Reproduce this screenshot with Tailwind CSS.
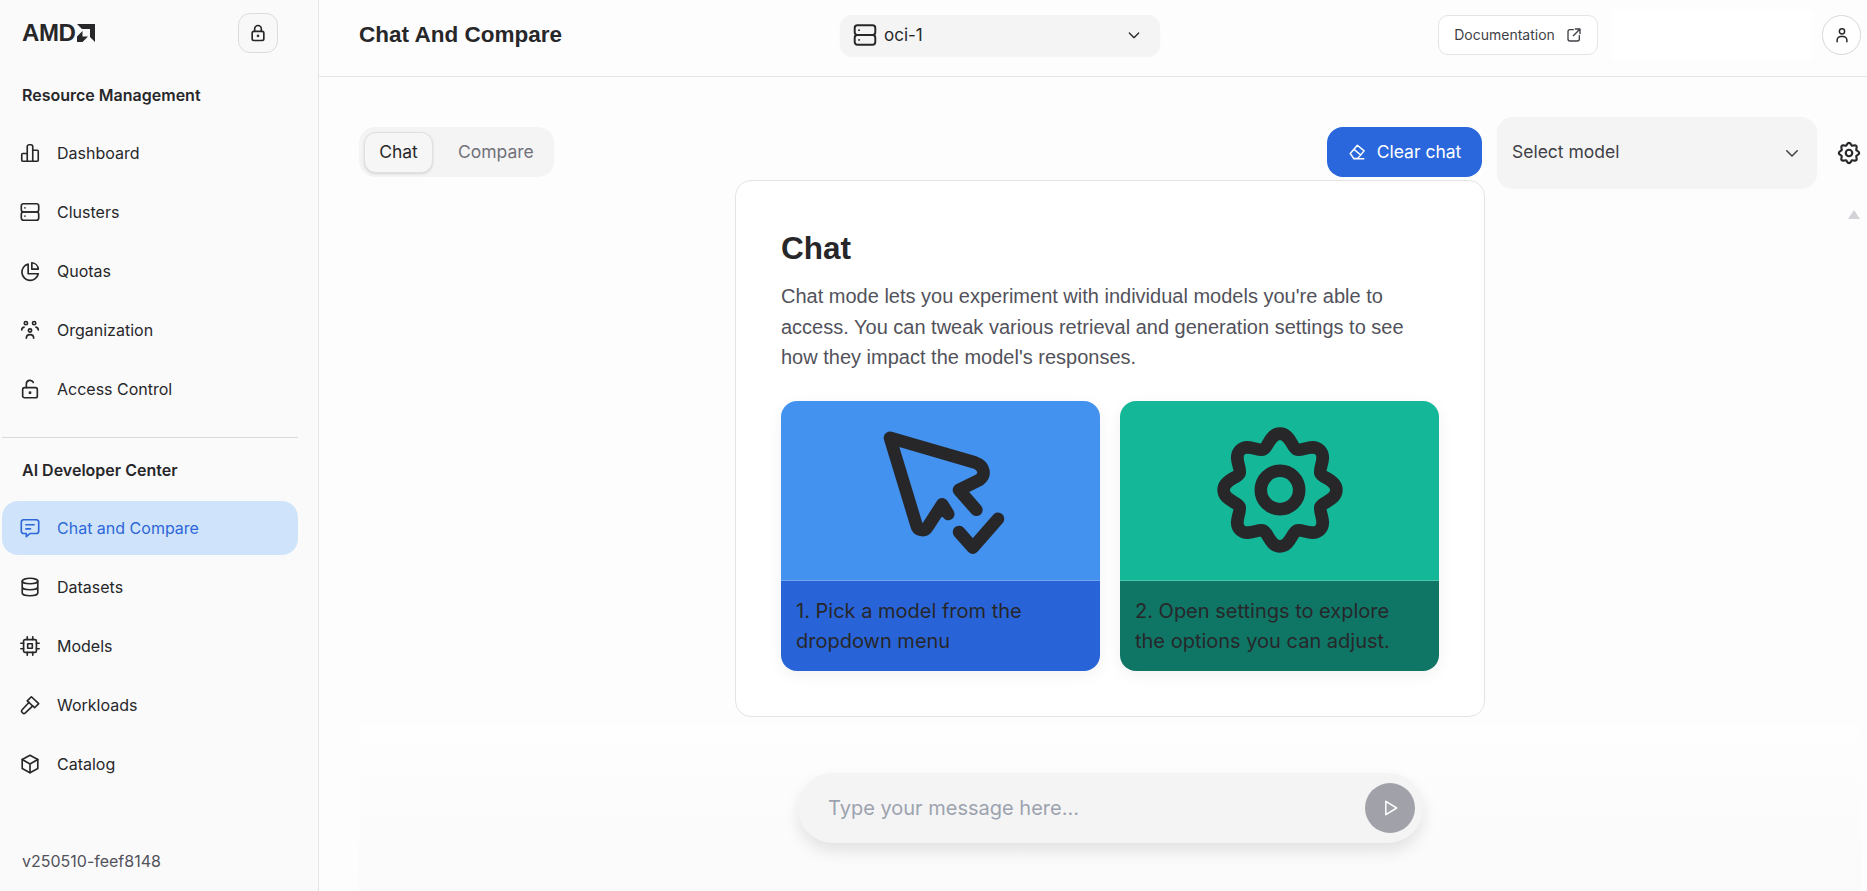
<!DOCTYPE html>
<html lang="en">
<head>
    <meta charset="UTF-8">
    <meta name="viewport" content="width=device-width, initial-scale=1.0">
    <title>Chat And Compare</title>
    <script src="https://cdn.jsdelivr.net/npm/@tailwindcss/browser@4"></script>
</head>
<body class="h-screen overflow-hidden bg-[#fdfdfd] text-[#27272a] font-['Inter',sans-serif]">
    <div class="flex h-full">
        <!-- Sidebar -->
        <aside class="w-[319px] shrink-0 h-full bg-[#fafafa] border-r border-[#e4e4e7] flex flex-col">
            <div class="h-[77px] pl-[22px] pt-[13px] flex items-start">
                <div class="flex items-center h-[40px] w-[216px]">
                    <span class="font-['Liberation_Sans',sans-serif] font-bold text-[24px] leading-none tracking-[-0.4px] text-[#27272a]">AMD</span>
                    <svg class="ml-[2px] w-[18px] h-[18px] -mt-[1px]" viewBox="0 0 18 18" fill="#27272a">
                        <path d="M0 0H18V18L13 13V5H5Z"></path>
                        <path d="M5.5 7 0 12.5V18H5.5L11 12.5H5.5Z"></path>
                    </svg>
                </div>
                <button class="w-[40px] h-[40px] rounded-xl border border-[#dcdcdf] bg-[#f8f8f8] flex items-center justify-center">
                    <svg class="w-5 h-5" fill="none" stroke="currentColor" stroke-width="2" stroke-linecap="round" stroke-linejoin="round" viewBox="0 0 24 24">
                        <rect x="5" y="10" width="14" height="11" rx="2"></rect>
                        <path d="M8 10V7a4 4 0 0 1 8 0v3"></path>
                        <circle cx="12" cy="15.5" r=".6"></circle>
                    </svg>
                </button>
            </div>

            <h2 class="h-[36px] pl-[22px] flex items-center text-base font-semibold">Resource Management</h2>
            <nav class="mt-[13px] ml-[2px] w-[296px] flex flex-col gap-[5px] text-base">
                <a class="h-[54px] pl-[17px] flex items-center gap-[16px]">
                    <svg class="w-[22px] h-[22px]" fill="none" stroke="currentColor" stroke-width="1.800" stroke-linecap="round" stroke-linejoin="round" viewBox="0 0 24 24"><path d="M3 13.500a1 1 0 0 1 1-1h5V21H4a1 1 0 0 1-1-1zM9 5a2 2 0 0 1 2-2h2a2 2 0 0 1 2 2v16H9zM15 9h5a1 1 0 0 1 1 1v10a1 1 0 0 1-1 1h-5"></path></svg>
                    <span>Dashboard</span>
                </a>
                <a class="h-[54px] pl-[17px] flex items-center gap-[16px]">
                    <svg class="w-[22px] h-[22px]" fill="none" stroke="currentColor" stroke-width="1.800" stroke-linecap="round" stroke-linejoin="round" viewBox="0 0 24 24"><rect x="2.500" y="3" width="19" height="9" rx="2.500"></rect><rect x="2.500" y="12" width="19" height="9" rx="2.500"></rect><path d="M6.500 7.500h.01M6.500 16.500h.01"></path></svg>
                    <span>Clusters</span>
                </a>
                <a class="h-[54px] pl-[17px] flex items-center gap-[16px]">
                    <svg class="w-[22px] h-[22px]" fill="none" stroke="currentColor" stroke-width="1.800" stroke-linecap="round" stroke-linejoin="round" viewBox="0 0 24 24"><path d="M10 4.500a9 9 0 1 0 11 10.500H10z"></path><path d="M14 3a7.500 7.500 0 0 1 7 7h-7z"></path></svg>
                    <span>Quotas</span>
                </a>
                <a class="h-[54px] pl-[17px] flex items-center gap-[16px]">
                    <svg class="w-[22px] h-[22px]" fill="none" stroke="currentColor" stroke-width="1.800" stroke-linecap="round" stroke-linejoin="round" viewBox="0 0 24 24"><circle cx="7.500" cy="4.500" r="1.800"></circle><circle cx="16.500" cy="4.500" r="1.800"></circle><circle cx="12" cy="12.500" r="1.800"></circle><path d="M3 12c0-1.800 1-3 2.500-3.200M21 12c0-1.800-1-3-2.500-3.200M8 21c0-2.400 1.600-4 4-4s4 1.600 4 4"></path></svg>
                    <span>Organization</span>
                </a>
                <a class="h-[54px] pl-[17px] flex items-center gap-[16px]">
                    <svg class="w-[22px] h-[22px]" fill="none" stroke="currentColor" stroke-width="1.800" stroke-linecap="round" stroke-linejoin="round" viewBox="0 0 24 24"><rect x="4" y="10.500" width="16" height="11" rx="2"></rect><path d="M8 10.500V6.500a4 4 0 0 1 7.600-1.700"></path><circle cx="12" cy="16" r=".7"></circle></svg>
                    <span>Access Control</span>
                </a>
            </nav>

            <div class="mt-[21px] ml-[2px] w-[296px] border-t border-[#d8d8da]"></div>

            <h2 class="mt-[14px] h-[36px] pl-[22px] flex items-center text-base font-semibold">AI Developer Center</h2>
            <nav class="mt-[13px] ml-[2px] w-[296px] flex flex-col gap-[5px] text-base">
                <a class="h-[54px] pl-[17px] flex items-center gap-[16px] rounded-2xl bg-[#cfe4fa] text-[#2d67d8]">
                    <svg class="w-[22px] h-[22px]" fill="none" stroke="currentColor" stroke-width="1.800" stroke-linecap="round" stroke-linejoin="round" viewBox="0 0 24 24"><path d="M5 3h14a2.500 2.500 0 0 1 2.500 2.500v10A2.500 2.500 0 0 1 19 18h-7l-4 3.500V18H5a2.500 2.500 0 0 1-2.500-2.500v-10A2.500 2.500 0 0 1 5 3z"></path><path d="M7.500 8.500h9M7.500 13h5"></path></svg>
                    <span>Chat and Compare</span>
                </a>
                <a class="h-[54px] pl-[17px] flex items-center gap-[16px]">
                    <svg class="w-[22px] h-[22px]" fill="none" stroke="currentColor" stroke-width="1.800" stroke-linecap="round" stroke-linejoin="round" viewBox="0 0 24 24"><ellipse cx="12" cy="5.500" rx="8.500" ry="3"></ellipse><path d="M3.500 5.500v13c0 1.700 3.800 3 8.500 3s8.500-1.300 8.500-3v-13M3.500 12c0 1.700 3.800 3 8.500 3s8.500-1.300 8.500-3"></path></svg>
                    <span>Datasets</span>
                </a>
                <a class="h-[54px] pl-[17px] flex items-center gap-[16px]">
                    <svg class="w-[22px] h-[22px]" fill="none" stroke="currentColor" stroke-width="1.800" stroke-linecap="round" stroke-linejoin="round" viewBox="0 0 24 24"><rect x="5" y="5" width="14" height="14" rx="1.500"></rect><rect x="9.500" y="9.500" width="5" height="5"></rect><path d="M9 2v3M15 2v3M9 19v3M15 19v3M2 9h3M2 15h3M19 9h3M19 15h3"></path></svg>
                    <span>Models</span>
                </a>
                <a class="h-[54px] pl-[17px] flex items-center gap-[16px]">
                    <svg class="w-[22px] h-[22px]" fill="none" stroke="currentColor" stroke-width="1.800" stroke-linecap="round" stroke-linejoin="round" viewBox="0 0 24 24"><path d="M11 9 3.200 17.400a1.800 1.800 0 0 0 .1 2.500l.8.800a1.800 1.800 0 0 0 2.500 .1L15 13"></path><path d="M9 7.500 13.500 3l8 7.500-4.500 4.500z"></path></svg>
                    <span>Workloads</span>
                </a>
                <a class="h-[54px] pl-[17px] flex items-center gap-[16px]">
                    <svg class="w-[22px] h-[22px]" fill="none" stroke="currentColor" stroke-width="1.800" stroke-linecap="round" stroke-linejoin="round" viewBox="0 0 24 24"><path d="M12 2.500 20.500 7v10L12 21.500 3.500 17V7z"></path><path d="M3.500 7 12 12l8.500-5M12 12v9.500"></path></svg>
                    <span>Catalog</span>
                </a>
            </nav>

            <div class="mt-auto pb-[18px] pl-[22px] text-base text-[#52525b]">v250510-feef8148</div>
        </aside>

        <!-- Main -->
        <main class="flex-1 min-w-0 h-full flex flex-col relative">
            <header class="h-[77px] shrink-0 border-b border-[#e4e4e7] pl-[40px] pr-[6px] flex items-center">
                <h1 class="w-[481px] text-[22.500px] font-semibold font-['Liberation_Sans',sans-serif] -mt-[7px]">Chat And Compare</h1>
                <div class="w-[320px] h-[41px] -mt-[6px] bg-[#f4f4f5] rounded-xl shadow-[0_1px_2px_rgba(0,0,0,0.04)] pl-[12px] pr-[18px] flex items-center">
                    <svg class="w-[26px] h-[26px]" fill="none" stroke="currentColor" stroke-width="1.800" stroke-linecap="round" stroke-linejoin="round" viewBox="0 0 24 24"><rect x="2.500" y="3" width="19" height="9" rx="2.500"></rect><rect x="2.500" y="12" width="19" height="9" rx="2.500"></rect><path d="M6.500 7.500h.01M6.500 16.500h.01"></path></svg>
                    <span class="ml-[6px] text-[17px] mt-[1px]">oci-1</span>
                    <svg class="ml-auto w-[16px] h-[16px]" fill="none" stroke="currentColor" stroke-width="2" stroke-linecap="round" stroke-linejoin="round" viewBox="0 0 24 24"><path d="m5 9 7 7 7-7"></path></svg>
                </div>
                <a class="ml-auto w-[160px] h-[40px] -mt-[6px] rounded-[10px] border border-[#e4e4e7] bg-white flex items-center justify-center gap-[11px] text-sm text-[#3f3f46]">
                    <span>Documentation</span>
                    <svg class="w-[16px] h-[16px]" fill="none" stroke="currentColor" stroke-width="2" stroke-linecap="round" stroke-linejoin="round" viewBox="0 0 24 24"><path d="M11 4H6a3 3 0 0 0-3 3v11a3 3 0 0 0 3 3h11a3 3 0 0 0 3-3v-5M14 3h7v7M21 3 11 13"></path></svg>
                </a>
                <div class="ml-[14px] w-[201px] h-[50px] -mt-[6px] bg-white blur-[2px]"></div>
                <button class="ml-[9px] w-[39px] h-[40px] -mt-[6px] rounded-full border border-[#d8d8da] bg-white flex items-center justify-center">
                    <svg class="w-[18px] h-[18px]" fill="none" stroke="currentColor" stroke-width="2" stroke-linecap="round" stroke-linejoin="round" viewBox="0 0 24 24"><circle cx="12" cy="7" r="3.500"></circle><path d="M5.500 21v-2a5 5 0 0 1 5-5h3a5 5 0 0 1 5 5v2"></path></svg>
                </button>
            </header>

            <div class="flex-1 min-h-0 flex flex-col pl-[40px] pr-[6px] pt-[40px]">
                <!-- Toolbar -->
                <div class="flex items-center h-[71px] shrink-0 -mr-[1px]">
                    <div class="w-[195px] h-[50px] -mt-[1px] rounded-2xl bg-[#f4f4f5] pl-[5px] flex items-center">
                        <div class="w-[69px] h-[41px] rounded-xl border border-[#e0e0e3] bg-[#f6f6f6] shadow-sm flex items-center justify-center text-[17.500px] text-[#27272a]">Chat</div>
                        <div class="ml-[25px] text-[17.500px] text-[#71717a]">Compare</div>
                    </div>
                    <button class="ml-auto w-[155px] h-[50px] -mt-[1px] rounded-2xl bg-[#2b67dc] text-white text-[17.500px] flex items-center justify-center gap-[11px]">
                        <svg class="w-[18px] h-[18px]" fill="none" stroke="currentColor" stroke-width="2" stroke-linecap="round" stroke-linejoin="round" viewBox="0 0 24 24"><path d="m3 14 9.500-11 9 7.500L13 20.500H7.500zM8 8.500l9 7.500M7.500 21H21"></path></svg>
                        <span>Clear chat</span>
                    </button>
                    <div class="ml-[15px] w-[320px] h-[71px] rounded-2xl bg-[#f4f4f5] shadow-[0_1px_2px_rgba(0,0,0,0.04)] pl-[15px] pr-[16px] flex items-center text-[17.500px] text-[#3f3f46]">
                        <span>Select model</span>
                        <svg class="ml-auto w-[18px] h-[18px]" fill="none" stroke="currentColor" stroke-width="2" stroke-linecap="round" stroke-linejoin="round" viewBox="0 0 24 24"><path d="m5 9 7 7 7-7"></path></svg>
                    </div>
                    <svg class="ml-[19px] w-[26px] h-[26px]" fill="none" stroke="currentColor" stroke-width="2" stroke-linecap="round" stroke-linejoin="round" viewBox="0 0 24 24">
                        <path d="M12 2.600C13.700 2.600 13.963 4.912 14.794 5.256S17.445 4.151 18.647 5.353S18.400 8.375 18.744 9.206S21.400 10.300 21.400 12S19.088 13.963 18.744 14.794S19.849 17.445 18.647 18.647S15.625 18.400 14.794 18.744S13.700 21.400 12 21.400S10.037 19.088 9.206 18.744S6.555 19.849 5.353 18.647S5.600 15.625 5.256 14.794S2.600 13.700 2.600 12S4.912 10.037 5.256 9.206S4.151 6.555 5.353 5.353S8.375 5.600 9.206 5.256S10.300 2.600 12 2.600Z"></path>
                        <circle cx="12" cy="12" r="3"></circle>
                    </svg>
                </div>

                <!-- Intro card -->
                <section class="-mt-[8px] mx-auto w-[750px] h-[537px] shrink-0 rounded-2xl border border-[#e4e4e7] bg-white pt-[47px] px-[45px]">
                    <h2 class="font-['Liberation_Sans',sans-serif] font-bold text-[31.500px] leading-[40px]">Chat</h2>
                    <p class="mt-[13px] font-['Liberation_Sans',sans-serif] text-[20px] leading-[30.500px] text-[#52525b]">Chat mode lets you experiment with individual models you're able to access. You can tweak various retrieval and generation settings to see how they impact the model's responses.</p>
                    <div class="mt-[28px] flex gap-[20px]">
                        <div class="w-[319px] h-[270px] rounded-2xl overflow-hidden flex flex-col shadow-[0_4px_16px_rgba(0,0,0,0.06)]">
                            <div class="h-[180px] bg-[#4392ef] flex items-center justify-center border-b border-[#6ea6f0]">
                                <svg class="w-[144px] h-[144px]" fill="none" stroke="#27272a" stroke-width="2.100" stroke-linecap="round" stroke-linejoin="round" viewBox="0 0 24 24">
                                    <path d="M13.200 16 12.200 14.400 9.800 18.100C9.200 19.100 8.100 18.700 7.900 17.800L3.500 3.300 17.600 7.400C19.300 8 19.500 9.500 18.400 10.300L15 12 17.900 15.300"></path>
                                    <path d="M15 19 17.300 21.600 21.500 16.800"></path>
                                </svg>
                            </div>
                            <div class="flex-1 bg-[#2864d8] pt-[15px] px-[15px] text-[20px] leading-[30px]">1. Pick a model from the dropdown menu</div>
                        </div>
                        <div class="w-[319px] h-[270px] rounded-2xl overflow-hidden flex flex-col shadow-[0_4px_16px_rgba(0,0,0,0.06)]">
                            <div class="h-[180px] bg-[#14b798] flex items-center justify-center border-b border-[#4cc7ae]">
                                <svg class="w-[144px] h-[144px]" fill="none" stroke="#27272a" stroke-width="2.100" stroke-linecap="round" stroke-linejoin="round" viewBox="0 0 24 24">
                                    <path d="M12 2.600C13.700 2.600 13.963 4.912 14.794 5.256S17.445 4.151 18.647 5.353S18.400 8.375 18.744 9.206S21.400 10.300 21.400 12S19.088 13.963 18.744 14.794S19.849 17.445 18.647 18.647S15.625 18.400 14.794 18.744S13.700 21.400 12 21.400S10.037 19.088 9.206 18.744S6.555 19.849 5.353 18.647S5.600 15.625 5.256 14.794S2.600 13.700 2.600 12S4.912 10.037 5.256 9.206S4.151 6.555 5.353 5.353S8.375 5.600 9.206 5.256S10.300 2.600 12 2.600Z"></path>
                                    <circle cx="12" cy="12" r="3.200"></circle>
                                </svg>
                            </div>
                            <div class="flex-1 bg-[#0f7666] pt-[15px] px-[15px] text-[20px] leading-[30px]">2. Open settings to explore the options you can adjust.</div>
                        </div>
                    </div>
                </section>

                <!-- Message input -->
                <div class="flex-1 mt-[8px] pt-[48px] bg-gradient-to-b from-[#fefefe] to-[#fafafa]">
                    <div class="ml-[439px] w-[625px] h-[70px] rounded-full bg-[#f4f4f5] shadow-[0_8px_16px_rgba(0,0,0,0.1)] pl-[30px] pr-[8px] flex items-center">
                        <span class="text-[20px] text-[#9ca3af]">Type your message here...</span>
                        <button class="ml-auto w-[50px] h-[50px] rounded-full bg-[#a1a1aa] flex items-center justify-center">
                            <svg class="w-[20px] h-[20px]" fill="none" stroke="white" stroke-width="1.800" stroke-linejoin="round" viewBox="0 0 24 24"><path d="M7 4 20 12 7 20z"></path></svg>
                        </button>
                    </div>
                </div>
            </div>

            <!-- Scrollbar arrow -->
            <svg class="absolute left-[1529px] top-[210px] w-[12px] h-[9px]" viewBox="0 0 12 9" fill="#d4d4d8"><path d="M6 0 12 9H0z"></path></svg>
        </main>
    </div>
</body>
</html>
